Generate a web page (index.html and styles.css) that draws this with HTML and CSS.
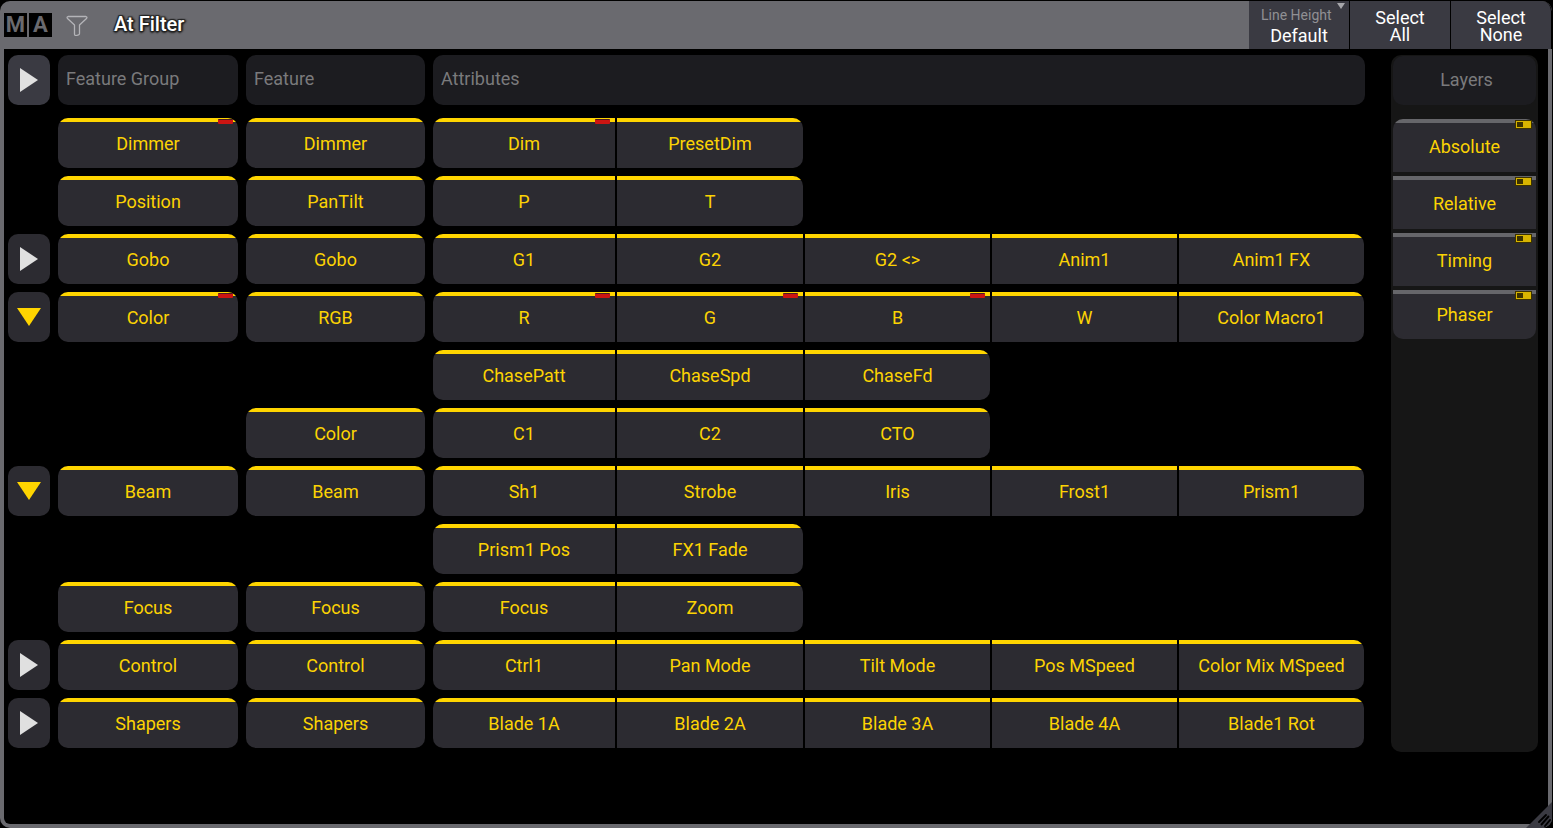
FILE: index.html
```html
<!DOCTYPE html>
<html lang="en">
<head>
    <meta charset="UTF-8">
    <meta name="viewport" content="width=device-width, initial-scale=1.0">
    <title>At Filter</title>
    <link rel="stylesheet" href="styles.css">
</head>
<body>
    <div class="window">
        <header class="titlebar">
            <div class="logo"><span>M</span><span>A</span></div>
            <svg class="funnel" viewBox="0 0 22 22" width="22" height="22">
                <path d="M2 2.500h18q1.500.5.500 2L13.500 11v8.500q0 1-1 1.300l-2 .7q-2 .3-2-1.500v-9L1.500 4.500q-1-1.500.5-2z" fill="none" stroke="#b4b4b8" stroke-width="1.300" stroke-linejoin="round"/>
            </svg>
            <h1>At Filter</h1>
            <div class="actions">
                <div class="dropdown">
                    <label for="line-height">Line Height</label>
                    <select id="line-height">
                        <option>Default</option>
                    </select>
                </div>
                <button type="button">Select<br>All</button>
                <button type="button">Select<br>None</button>
            </div>
        </header>

        <main class="content">
            <section class="filter">
                <div class="row head">
                    <button type="button" class="toggle" aria-label="Expand all"><svg viewBox="0 0 24 24" width="24" height="24"><path d="M3 0v24l18-12z"/></svg></button>
                    <div class="caption">Feature Group</div>
                    <div class="caption">Feature</div>
                    <div class="caption">Attributes</div>
                </div>

                <div class="row">
                    <button type="button" class="cell group active">Dimmer</button>
                    <button type="button" class="cell feature">Dimmer</button>
                    <div class="attributes">
                        <button type="button" class="cell active">Dim</button>
                        <button type="button" class="cell">PresetDim</button>
                    </div>
                </div>

                <div class="row">
                    <button type="button" class="cell group">Position</button>
                    <button type="button" class="cell feature">PanTilt</button>
                    <div class="attributes">
                        <button type="button" class="cell">P</button>
                        <button type="button" class="cell">T</button>
                    </div>
                </div>

                <div class="row">
                    <button type="button" class="toggle" aria-label="Expand Gobo"><svg viewBox="0 0 24 24" width="24" height="24"><path d="M3 0v24l18-12z"/></svg></button>
                    <button type="button" class="cell group">Gobo</button>
                    <button type="button" class="cell feature">Gobo</button>
                    <div class="attributes">
                        <button type="button" class="cell">G1</button>
                        <button type="button" class="cell">G2</button>
                        <button type="button" class="cell">G2 &lt;&gt;</button>
                        <button type="button" class="cell">Anim1</button>
                        <button type="button" class="cell">Anim1 FX</button>
                    </div>
                </div>

                <div class="row">
                    <button type="button" class="toggle open" aria-label="Collapse Color"><svg viewBox="0 0 24 24" width="24" height="24"><path d="M0 3h24l-12 18z"/></svg></button>
                    <button type="button" class="cell group active">Color</button>
                    <button type="button" class="cell feature">RGB</button>
                    <div class="attributes">
                        <button type="button" class="cell active">R</button>
                        <button type="button" class="cell active">G</button>
                        <button type="button" class="cell active">B</button>
                        <button type="button" class="cell">W</button>
                        <button type="button" class="cell">Color Macro1</button>
                    </div>
                </div>

                <div class="row">
                    <div class="attributes">
                        <button type="button" class="cell">ChasePatt</button>
                        <button type="button" class="cell">ChaseSpd</button>
                        <button type="button" class="cell">ChaseFd</button>
                    </div>
                </div>

                <div class="row">
                    <button type="button" class="cell feature">Color</button>
                    <div class="attributes">
                        <button type="button" class="cell">C1</button>
                        <button type="button" class="cell">C2</button>
                        <button type="button" class="cell">CTO</button>
                    </div>
                </div>

                <div class="row">
                    <button type="button" class="toggle open" aria-label="Collapse Beam"><svg viewBox="0 0 24 24" width="24" height="24"><path d="M0 3h24l-12 18z"/></svg></button>
                    <button type="button" class="cell group">Beam</button>
                    <button type="button" class="cell feature">Beam</button>
                    <div class="attributes">
                        <button type="button" class="cell">Sh1</button>
                        <button type="button" class="cell">Strobe</button>
                        <button type="button" class="cell">Iris</button>
                        <button type="button" class="cell">Frost1</button>
                        <button type="button" class="cell">Prism1</button>
                    </div>
                </div>

                <div class="row">
                    <div class="attributes">
                        <button type="button" class="cell">Prism1 Pos</button>
                        <button type="button" class="cell">FX1 Fade</button>
                    </div>
                </div>

                <div class="row">
                    <button type="button" class="cell group">Focus</button>
                    <button type="button" class="cell feature">Focus</button>
                    <div class="attributes">
                        <button type="button" class="cell">Focus</button>
                        <button type="button" class="cell">Zoom</button>
                    </div>
                </div>

                <div class="row">
                    <button type="button" class="toggle" aria-label="Expand Control"><svg viewBox="0 0 24 24" width="24" height="24"><path d="M3 0v24l18-12z"/></svg></button>
                    <button type="button" class="cell group">Control</button>
                    <button type="button" class="cell feature">Control</button>
                    <div class="attributes">
                        <button type="button" class="cell">Ctrl1</button>
                        <button type="button" class="cell">Pan Mode</button>
                        <button type="button" class="cell">Tilt Mode</button>
                        <button type="button" class="cell">Pos MSpeed</button>
                        <button type="button" class="cell">Color Mix MSpeed</button>
                    </div>
                </div>

                <div class="row">
                    <button type="button" class="toggle" aria-label="Expand Shapers"><svg viewBox="0 0 24 24" width="24" height="24"><path d="M3 0v24l18-12z"/></svg></button>
                    <button type="button" class="cell group">Shapers</button>
                    <button type="button" class="cell feature">Shapers</button>
                    <div class="attributes">
                        <button type="button" class="cell">Blade 1A</button>
                        <button type="button" class="cell">Blade 2A</button>
                        <button type="button" class="cell">Blade 3A</button>
                        <button type="button" class="cell">Blade 4A</button>
                        <button type="button" class="cell">Blade1 Rot</button>
                    </div>
                </div>
            </section>

            <aside class="layers">
                <h2>Layers</h2>
                <div class="layer-list">
                    <button type="button" class="layer">Absolute</button>
                    <button type="button" class="layer">Relative</button>
                    <button type="button" class="layer">Timing</button>
                    <button type="button" class="layer">Phaser</button>
                </div>
            </aside>
        </main>

        <svg class="resizer" viewBox="0 0 26 26" width="26" height="26">
            <path d="M26 0v26H0z" fill="#3a3a42"/>
            <path d="M13 20l7-7M15.500 22.500l7-8M19 24l5-6" stroke="#000" stroke-width="1.900" stroke-linecap="round"/>
        </svg>
    </div>
</body>
</html>
```
FILE: styles.css
```css
*, *::after {
    box-sizing: border-box;
}
body {
    margin: 0;
    padding: 1px 1px 0 0;
    background: black;
    font-family: Roboto, sans-serif;
    font-size: 18px;
}
button, select {
    font: inherit;
    border: 0;
    padding: 0;
    margin: 0;
    cursor: pointer;
}
.window {
    position: relative;
    display: flex;
    flex-direction: column;
    min-height: calc(100vh - 1px);
    background: #6a6a6f;
    border-radius: 10px;
    overflow: hidden;
}

/* Title bar */
.titlebar {
    display: flex;
    align-items: center;
    height: 48px;
    padding-left: 4px;
}
.logo {
    display: flex;
    gap: 2px;
}
.logo span {
    width: 23px;
    height: 24px;
    background: black;
    color: #6a6a6f;
    font-size: 22px;
    font-weight: 700;
    line-height: 24px;
    text-align: center;
}
.funnel {
    margin-left: 14px;
}
h1 {
    margin: 0 0 0 26px;
    padding-bottom: 2px;
    color: white;
    font-size: 20px;
    font-weight: 500;
    line-height: 24px;
    text-shadow: -1px -1px 1px #222, 1px -1px 1px #222, -1px 1px 1px #222, 1px 1px 1px #222, 0 2px 2px #222, 2px 0 2px #222;
}
.actions {
    display: flex;
    align-self: stretch;
    margin-left: auto;
}
.actions > * {
    width: 101px;
    background: #3a3a42;
    border-right: 1px solid black;
    color: white;
}
.actions button {
    line-height: 17px;
    padding-top: 2px;
}
.actions button:last-child {
    border-radius: 0 10px 0 0;
}
.dropdown {
    position: relative;
    display: flex;
    flex-direction: column;
    padding-top: 4px;
}
.dropdown label {
    padding-left: 12px;
    color: #909094;
    font-size: 14px;
    line-height: 20px;
}
.dropdown select {
    appearance: none;
    width: 100%;
    height: 20px;
    background: none;
    color: white;
    text-align: center;
    text-align-last: center;
}
.dropdown::after {
    content: "";
    position: absolute;
    top: 2px;
    right: 4px;
    border: 4px solid transparent;
    border-top: 6px solid #a6a6aa;
    border-bottom: 0;
}

/* Filter grid */
.content {
    flex: 1;
    display: flex;
    align-items: flex-start;
    gap: 26px;
    margin: 0 4px 4px;
    padding: 6px 10px 6px 4px;
    background: black;
    border-radius: 0 0 6px 6px;
}
.filter {
    flex: 1;
    display: flex;
    flex-direction: column;
    gap: 8px;
}
.row {
    display: grid;
    grid-template-columns: 42px 180fr 179fr 932fr;
    grid-template-rows: 50px;
    gap: 8px;
}
.head {
    margin-bottom: 5px;
}
.caption {
    padding: 0 8px;
    background: #1c1c20;
    border-radius: 10px;
    color: #7a7a7c;
    line-height: 48px;
}
.toggle {
    display: flex;
    align-items: center;
    justify-content: center;
    background: #2c2b31;
    border-radius: 10px;
    fill: #e0e0e0;
}
.head .toggle {
    background: #3a3a42;
}
.toggle.open {
    fill: #ffd500;
}
.group {
    grid-column: 2;
}
.feature {
    grid-column: 3;
}
.attributes {
    grid-column: 4;
    display: grid;
    grid-template-columns: 182fr 186fr repeat(3, 185fr);
    gap: 2px;
    padding-right: 1px;
}
.cell, .layer {
    position: relative;
    background: linear-gradient(#ffd500 4px, #2c2b31 4px);
    color: #fcd303;
}
.group, .feature {
    border-radius: 10px;
}
.attributes .cell:first-child {
    border-radius: 10px 0 0 10px;
}
.attributes .cell:last-child {
    border-radius: 0 10px 10px 0;
}
.active::after {
    content: "";
    position: absolute;
    top: 1px;
    right: 5px;
    width: 15px;
    height: 5px;
    background: #cc1512;
    border-top: 1px solid #4a1a20;
    border-radius: 1px;
}

/* Layers panel */
.layers {
    width: 147px;
    min-height: 697px;
    padding: 1px 2px;
    background: #161616;
    border-radius: 10px;
}
.layers h2 {
    margin: 0;
    padding-left: 4px;
    height: 49px;
    background: #1c1c20;
    border-radius: 10px;
    color: #7a7a7c;
    font-size: 18px;
    font-weight: 400;
    line-height: 48px;
    text-align: center;
}
.layer-list {
    display: flex;
    flex-direction: column;
    gap: 4px;
    margin-top: 14px;
}
.layer {
    height: 53px;
    padding-top: 2px;
    background: linear-gradient(#66666a 4px, #2c2b31 4px);
}
.layer:first-child {
    border-radius: 10px 10px 0 0;
}
.layer:last-child {
    height: 49px;
    padding-top: 0;
    border-radius: 0 0 10px 10px;
}
.layer::after {
    content: "";
    position: absolute;
    top: 2px;
    right: 5px;
    width: 15px;
    height: 7px;
    background: linear-gradient(90deg, #3c3200 6px, #d8b400 6px);
    border: 1px solid #d8b400;
    outline: 1px solid #3c3200;
}

.resizer {
    position: absolute;
    right: 0;
    bottom: 0;
}
```
